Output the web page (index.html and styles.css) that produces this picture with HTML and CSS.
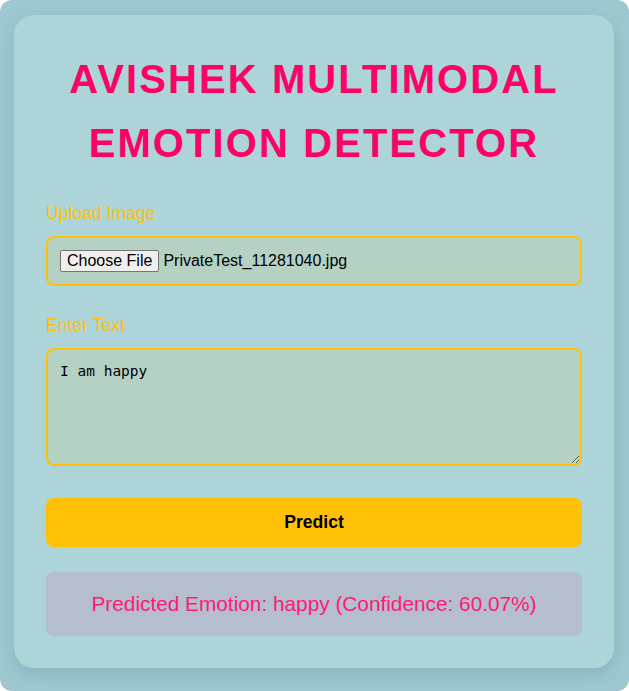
FILE: index.html
```html
<!DOCTYPE html>
<html>
<head>
<meta charset="utf-8">
<link rel="stylesheet" href="styles.css">
</head>
<body>
<div class="card">
  <h1 class="title">AVISHEK MULTIMODAL EMOTION DETECTOR</h1>
  <label class="label">Upload Image</label>
  <div class="file-box">
    <span class="file-btn">Choose File</span><span class="file-name">PrivateTest_11281040.jpg</span>
  </div>
  <label class="label label-text">Enter Text</label>
  <textarea class="text-input">I am happy</textarea>
  <button class="predict">Predict</button>
  <div class="result">Predicted Emotion: happy (Confidence: 60.07%)</div>
</div>
</body>
</html>
```
FILE: styles.css
```css
html {
  background: #ffffff;
}
body {
  margin: 0;
  height: 691px;
  box-sizing: border-box;
  padding: 15px 0 0 14px;
  background: #9ec8d0;
  border-radius: 12px;
  font-family: "Liberation Sans", Arial, sans-serif;
}
.card {
  width: 600px;
  box-sizing: border-box;
  margin: 0;
  padding: 32px;
  background: #acd4d9;
  border-radius: 20px;
  box-shadow: 0 6px 16px rgba(40, 90, 110, 0.18);
  display: flex;
  flex-direction: column;
}
.title {
  margin: 0 0 28px;
  text-align: center;
  font-size: 40px;
  line-height: 64px;
  letter-spacing: 2.1px;
  font-weight: bold;
  color: #ff0066;
}
.label {
  display: block;
  font-size: 17.6px;
  line-height: 20px;
  color: #ffc107;
  margin-bottom: 13px;
}
.label-text {
  margin-top: 29px;
}
.file-box {
  height: 50px;
  box-sizing: border-box;
  border: 2px solid #ffc107;
  border-radius: 8px;
  background: #b4d1c4;
  padding: 0 12px;
  display: flex;
  align-items: center;
  font-size: 16px;
  color: #000;
}
.file-btn {
  display: inline-block;
  padding: 1px 6px;
  border: 1px solid #767676;
  border-radius: 2px;
  background: #efefef;
  font-size: 16px;
  line-height: 18px;
  margin-right: 4px;
  color: #000;
}
.file-name {
  font-size: 16px;
}
.text-input {
  height: 118px;
  box-sizing: border-box;
  border: 2px solid #ffc107;
  border-radius: 8px;
  background: #b4d1c4;
  padding: 13px 12px;
  font-family: "DejaVu Sans Mono", "Liberation Mono", monospace;
  font-size: 14.5px;
  color: #000;
  width: 100%;
  margin: 0;
}
.predict {
  margin-top: 32px;
  height: 49px;
  border: none;
  border-radius: 8px;
  background: #ffc107;
  font-family: "Liberation Sans", Arial, sans-serif;
  font-size: 17.6px;
  font-weight: bold;
  color: #000;
}
.result {
  margin-top: 25px;
  height: 64px;
  border-radius: 8px;
  background: #b4bece;
  color: #ff1a75;
  font-size: 20.8px;
  display: flex;
  align-items: center;
  justify-content: center;
}
```
